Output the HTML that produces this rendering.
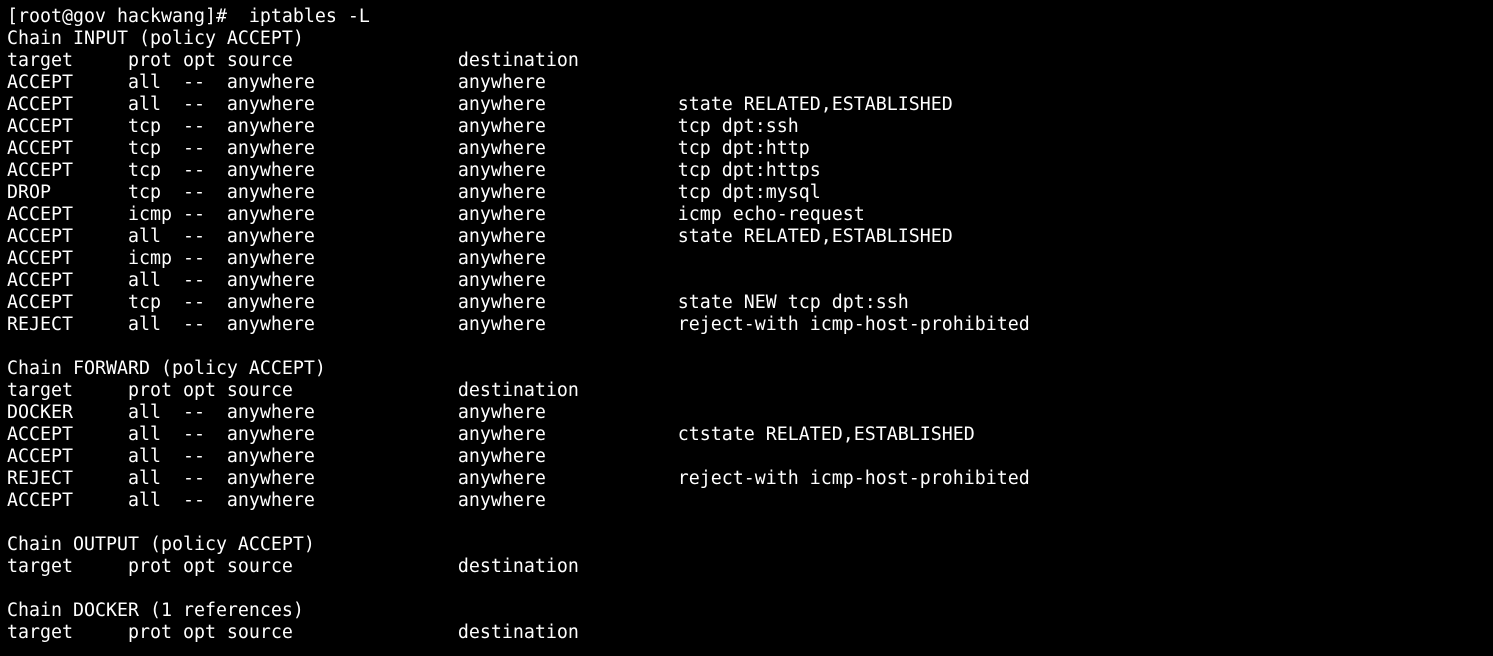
<!DOCTYPE html>
<html><head><meta charset="utf-8"><style>
html,body{margin:0;padding:0;background:#000;width:1493px;height:656px;overflow:hidden}
pre{margin:0;position:absolute;left:7px;top:6px;color:#fff;font-family:"DejaVu Sans Mono","Liberation Mono",monospace;font-size:18.27px;line-height:22px;letter-spacing:0}
</style></head><body>
<pre>[root@gov hackwang]#  iptables -L
Chain INPUT (policy ACCEPT)
target     prot opt source               destination
ACCEPT     all  --  anywhere             anywhere
ACCEPT     all  --  anywhere             anywhere            state RELATED,ESTABLISHED
ACCEPT     tcp  --  anywhere             anywhere            tcp dpt:ssh
ACCEPT     tcp  --  anywhere             anywhere            tcp dpt:http
ACCEPT     tcp  --  anywhere             anywhere            tcp dpt:https
DROP       tcp  --  anywhere             anywhere            tcp dpt:mysql
ACCEPT     icmp --  anywhere             anywhere            icmp echo-request
ACCEPT     all  --  anywhere             anywhere            state RELATED,ESTABLISHED
ACCEPT     icmp --  anywhere             anywhere
ACCEPT     all  --  anywhere             anywhere
ACCEPT     tcp  --  anywhere             anywhere            state NEW tcp dpt:ssh
REJECT     all  --  anywhere             anywhere            reject-with icmp-host-prohibited

Chain FORWARD (policy ACCEPT)
target     prot opt source               destination
DOCKER     all  --  anywhere             anywhere
ACCEPT     all  --  anywhere             anywhere            ctstate RELATED,ESTABLISHED
ACCEPT     all  --  anywhere             anywhere
REJECT     all  --  anywhere             anywhere            reject-with icmp-host-prohibited
ACCEPT     all  --  anywhere             anywhere

Chain OUTPUT (policy ACCEPT)
target     prot opt source               destination

Chain DOCKER (1 references)
target     prot opt source               destination
</pre>
</body></html>
